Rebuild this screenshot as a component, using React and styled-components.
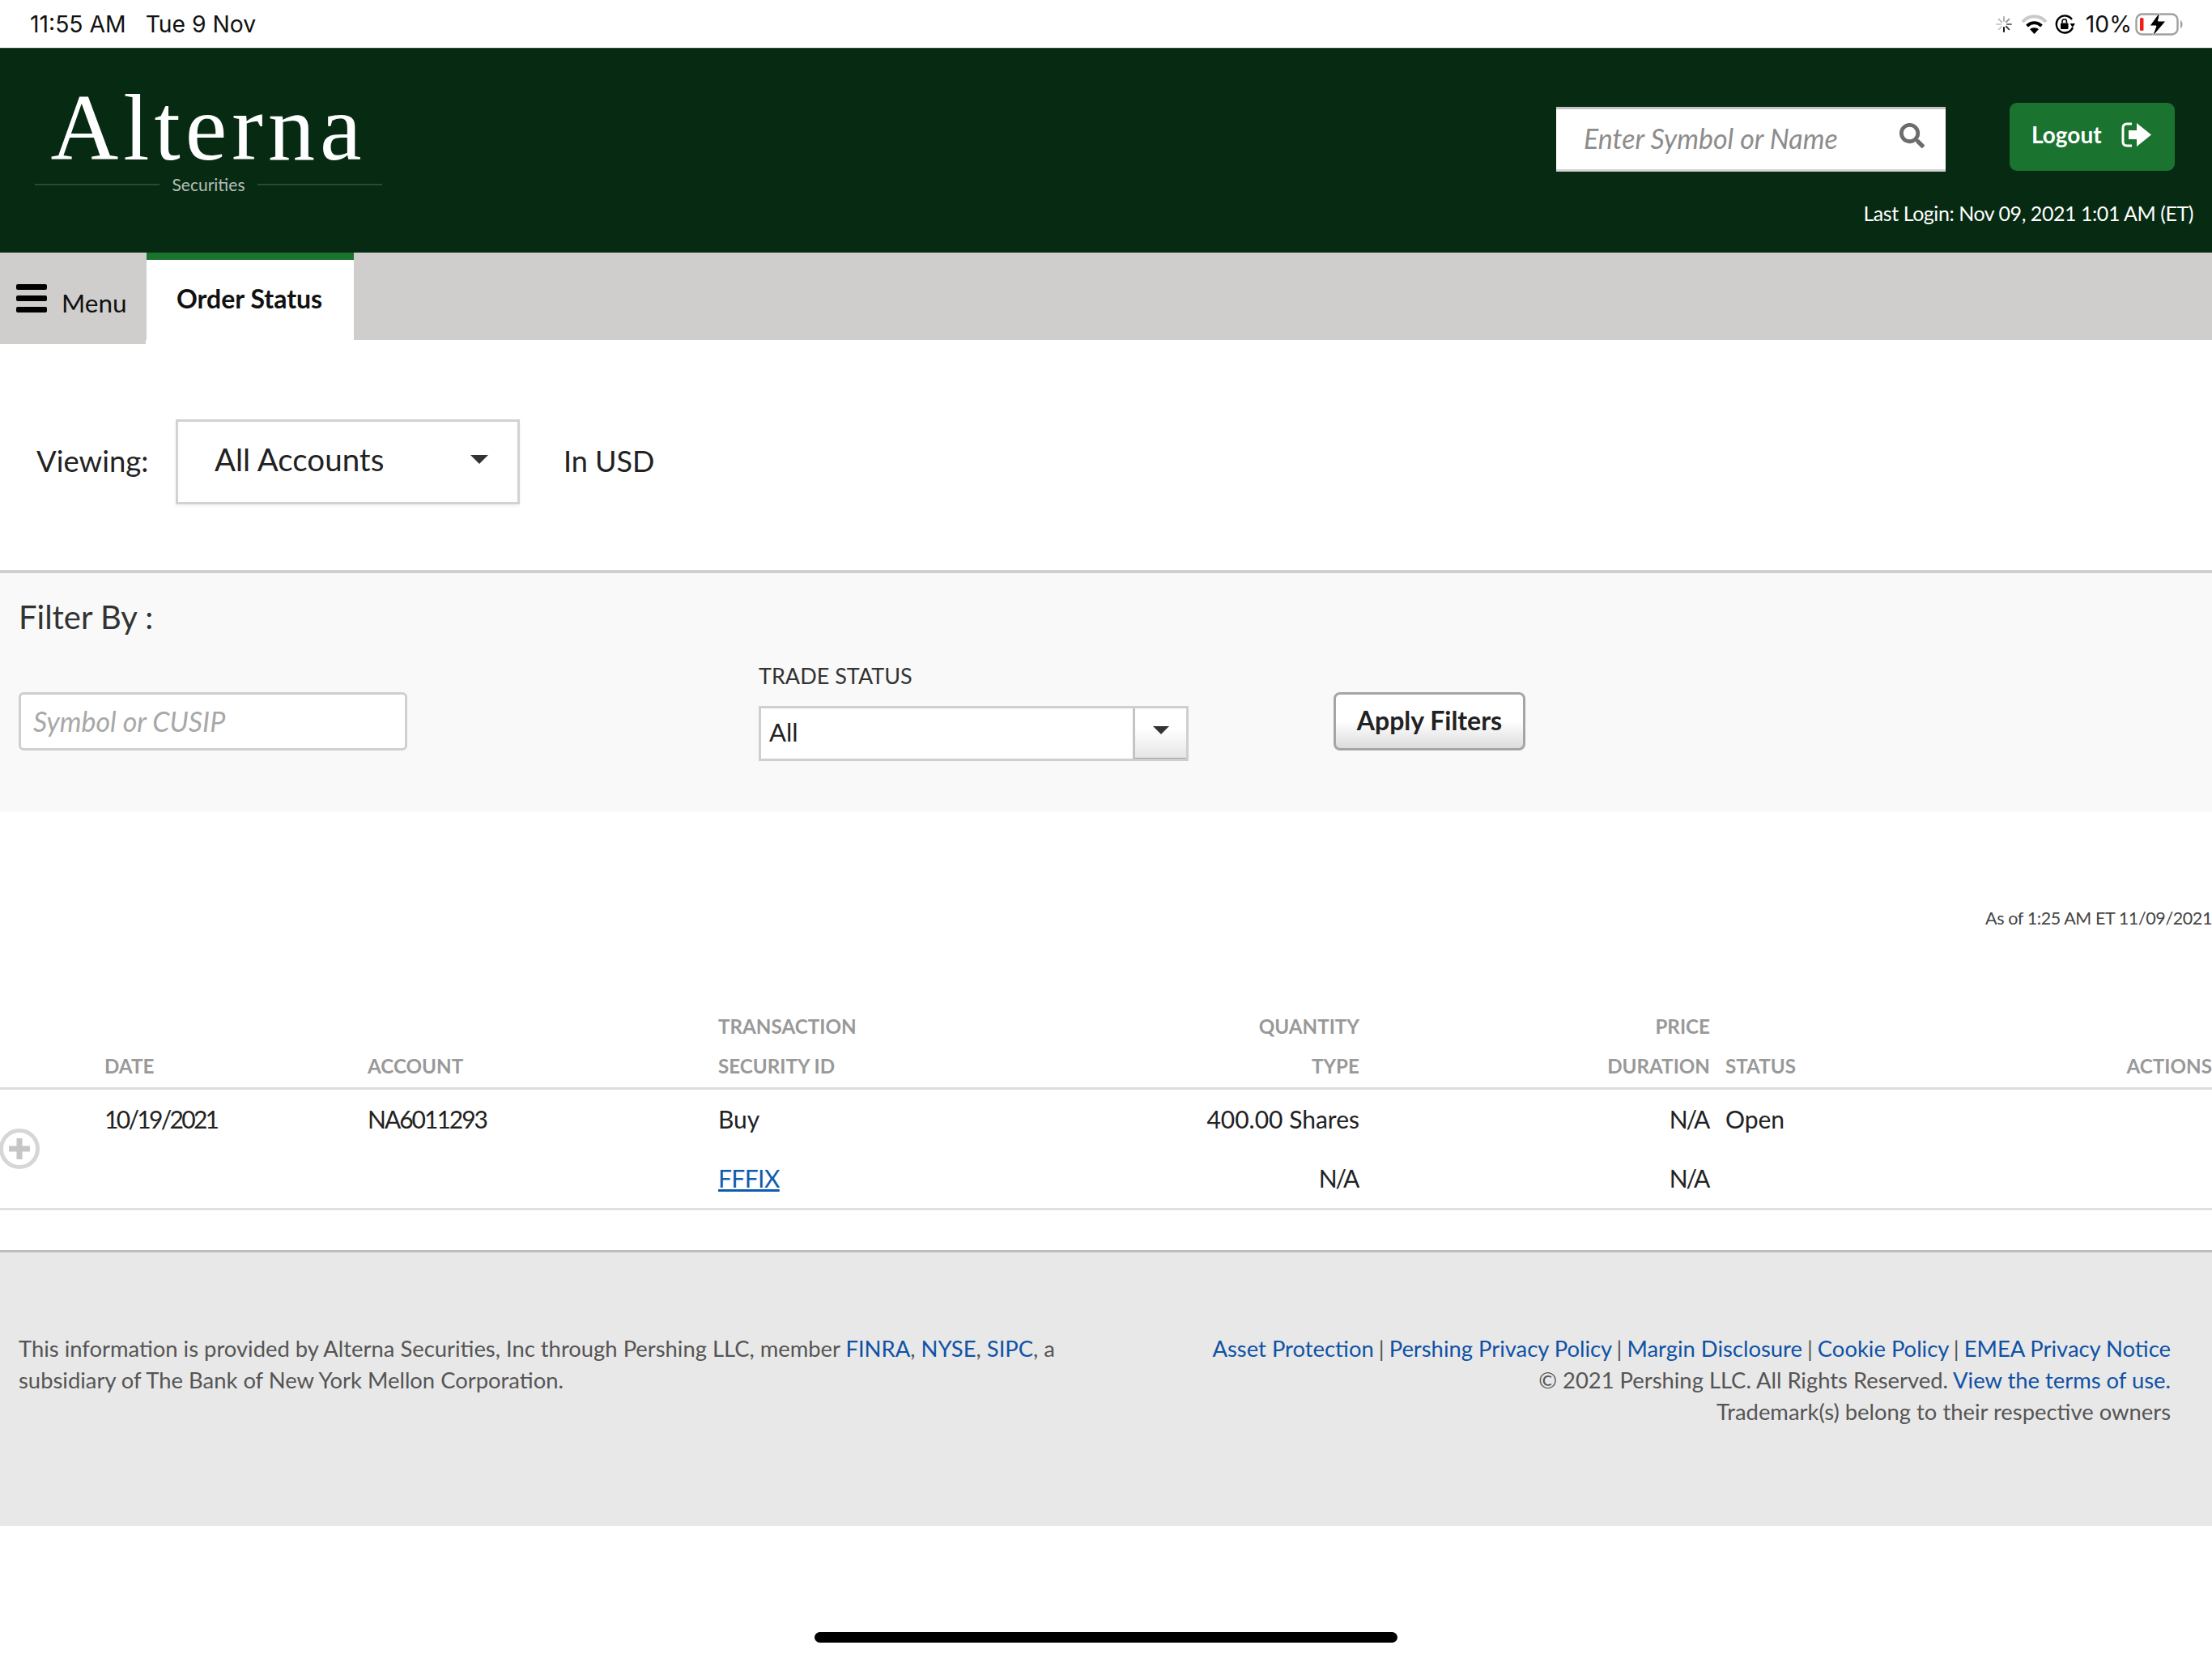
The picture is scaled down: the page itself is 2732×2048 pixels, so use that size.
import React from "react";
import styled, { createGlobalStyle } from "styled-components";
import { FaSearch } from "react-icons/fa";

const GlobalStyle = createGlobalStyle`
  html, body { margin: 0; padding: 0; background: #fff; }
  body { font-family: "Lato", "Liberation Sans", sans-serif; color: #222; }
  * { box-sizing: border-box; }
`;

const Page = styled.div`
  width: 2732px;
  height: 2048px;
  overflow: hidden;
  display: flex;
  flex-direction: column;
  background: #fff;
`;

const StatusBar = styled.div`
  height: 59px;
  flex: none;
  display: flex;
  justify-content: space-between;
  align-items: center;
  padding: 0 35px 0 37px;
  font-family: "Inter", sans-serif;
  font-size: 28.3px;
  color: #111;
`;

const StatusGroup = styled.div`
  display: flex;
  align-items: center;
  gap: ${(p) => p.$gap || 0}px;
`;

const BatteryLabel = styled.span`
  margin: 0 -5px 0 3px;
`;

const Header = styled.header`
  height: 253px;
  flex: none;
  display: flex;
  justify-content: space-between;
  background: #072a12;
  border-top: 1px solid #3a4a40;
`;

const Logo = styled.div`
  width: 429px;
  margin: 48px 0 0 43px;
  color: #fff;
  text-align: center;
`;

const LogoName = styled.div`
  font-family: "Liberation Serif", serif;
  font-size: 116px;
  line-height: 100px;
  letter-spacing: 6px;
`;

const LogoSub = styled.div`
  display: flex;
  align-items: center;
  gap: 16px;
  margin-top: 5px;
  font-size: 21px;
  line-height: 30px;
  color: #b5bfb8;

  &::before,
  &::after {
    content: "";
    flex: 1;
    height: 2px;
    background: #2b4a33;
  }
`;

const HeaderRight = styled.div`
  display: flex;
  flex-direction: column;
  align-items: flex-end;
  padding: 67px 23px 0 0;
`;

const HeaderActions = styled.div`
  display: flex;
  align-items: flex-start;
  gap: 79px;
  margin-right: 23px;
`;

const SearchBox = styled.div`
  width: 481px;
  height: 80px;
  margin-top: 5px;
  display: flex;
  align-items: center;
  justify-content: space-between;
  padding: 0 26px 4px 34px;
  background: #fff;
  border-top: 3px solid #c4c4c4;
  border-bottom: 3px solid #d4d4d4;
  font-size: 34px;
  font-style: italic;
  color: #8c8c8c;
  svg { color: #6c6c6c; font-size: 31px; margin-top: -6px; }
`;

const LogoutButton = styled.button`
  width: 204px;
  height: 84px;
  display: flex;
  align-items: center;
  gap: 24px;
  padding: 0 0 6px 27px;
  border: 0;
  border-radius: 9px;
  background: #1b7330;
  color: #fff;
  font-family: inherit;
  font-size: 28px;
  font-weight: 700;
`;

const LastLogin = styled.div`
  margin-top: 35px;
  font-size: 25px;
  line-height: 32px;
  letter-spacing: -0.45px;
  color: #fff;
`;

const TabBar = styled.nav`
  height: 108px;
  flex: none;
  display: flex;
  align-items: flex-start;
  background: #cfcecc;
`;

const MenuButton = styled.div`
  width: 180px;
  height: 113px;
  flex: none;
  display: flex;
  align-items: center;
  gap: 18px;
  padding: 0 0 0 20px;
  background: #cfcecc;
  font-size: 31.5px;
  color: #111;
  span { margin-top: 10px; }
`;

const Tab = styled.div`
  width: 256px;
  height: 108px;
  flex: none;
  padding: 28px 0 0 37px;
  margin-left: 1px;
  background: #fff;
  border-top: 9px solid #1b7330;
  font-size: 32px;
  line-height: 40px;
  font-weight: 700;
  color: #111;
`;

const ViewingRow = styled.section`
  height: 284px;
  flex: none;
  display: flex;
  align-items: center;
  padding: 0 0 0 45px;
  font-size: 36.5px;
  color: #222;
`;

const ViewingLabel = styled.span`
  width: 172px;
  margin-top: 14px;
`;

const AccountSelect = styled.div`
  width: 425px;
  height: 105px;
  margin-top: 16px;
  display: flex;
  align-items: center;
  justify-content: space-between;
  padding: 0 36px 6px 45px;
  border: 3px solid #d2d2d2;
  box-shadow: 0 2px 4px rgba(0, 0, 0, 0.06);
  font-size: 38.5px;
`;

const Caret = styled.i`
  width: 0;
  height: 0;
  border-left: ${(p) => p.$size}px solid transparent;
  border-right: ${(p) => p.$size}px solid transparent;
  border-top: ${(p) => p.$size}px solid #333;
`;

const Currency = styled.span`
  margin: 14px 0 0 54px;
  font-size: 36px;
`;

const FilterPanel = styled.section`
  height: 299px;
  flex: none;
  padding: 24px 0 0 23px;
  background: #f9f9f9;
  border-top: 4px solid #d0d0d0;
`;

const FilterTitle = styled.div`
  font-size: 40px;
  line-height: 60px;
  color: #333;
`;

const FilterRow = styled.div`
  display: flex;
  align-items: flex-start;
  margin-top: 28px;
`;

const SymbolInput = styled.div`
  width: 480px;
  height: 72px;
  margin: 35px 434px 0 0;
  padding: 0 0 2px 15px;
  display: flex;
  align-items: center;
  background: #fff;
  border: 3px solid #cfcfcf;
  border-radius: 6px;
  font-size: 34px;
  font-style: italic;
  color: #a8a8a8;
`;

const TradeColumn = styled.div`
  width: 531px;
  margin-right: 179px;
`;

const FieldLabel = styled.div`
  font-size: 27px;
  line-height: 30px;
  color: #333;
`;

const TradeSelect = styled.div`
  height: 68px;
  margin-top: 22px;
  display: flex;
  background: #fff;
  border: 3px solid #cfcfcf;
  font-size: 31px;
`;

const TradeValue = styled.div`
  flex: 1;
  padding: 10px 0 0 10px;
  color: #222;
`;

const TradeArrow = styled.div`
  width: 66px;
  display: flex;
  align-items: center;
  justify-content: center;
  padding-bottom: 8px;
  border-left: 3px solid #c4c4c4;
  border-bottom: 1px solid #a0a0a0;
  background: linear-gradient(#fff 40%, #e6e6e6);
`;

const ApplyButton = styled.button`
  width: 237px;
  height: 72px;
  margin-top: 35px;
  border: 3px solid #a5a5a5;
  border-radius: 8px;
  background: linear-gradient(#fff 50%, #dcdcdc);
  font-family: inherit;
  font-size: 32px;
  font-weight: 700;
  color: #222;
  padding: 0 0 4px;
`;

const AsOf = styled.div`
  height: 240px;
  flex: none;
  padding-top: 116px;
  text-align: right;
  font-size: 21.5px;
  line-height: 30px;
  letter-spacing: -0.4px;
  color: #444;
`;

const Row = styled.div`
  display: grid;
  grid-template-columns: 129px 325px 433px 513px 279px 433px 19px 269px 332px;
`;

const HeadRow = styled(Row)`
  padding-bottom: 2px;
  border-bottom: 3px solid #ddd;
  font-size: 24.2px;
  line-height: 49px;
  font-weight: 700;
  color: #999;
`;

const BodyRow = styled(Row)`
  border-bottom: 3px solid #e0e0e0;
  font-size: 30px;
  line-height: 73px;
  color: #222;
`;

const Cell = styled.div`
  grid-column: ${(p) => p.$col};
  display: flex;
  flex-direction: column;
  justify-content: ${(p) => (p.$top ? "flex-start" : "flex-end")};
  text-align: ${(p) => (p.$right ? "right" : "left")};
  letter-spacing: ${(p) => p.$spacing || 0}px;
`;

const NotApplicable = styled.span`
  margin-right: 2px;
  letter-spacing: -2.3px;
`;

const ExpandCell = styled.div`
  grid-column: 1;
  display: flex;
  align-items: center;
`;

const SecurityLink = styled.a`
  color: #0f5cb0;
  text-decoration: underline;
  letter-spacing: -0.6px;
`;

const TableGap = styled.div`
  height: 49px;
  flex: none;
`;

const Footer = styled.footer`
  height: 341px;
  flex: none;
  display: flex;
  justify-content: space-between;
  padding: 99px 51px 0 23px;
  background: #e8e8e8;
  border-top: 3px solid #bdbdbd;
  font-size: 27.4px;
  line-height: 39px;
  color: #555;
`;

const FooterRight = styled.div`
  text-align: right;
`;

const FooterLink = styled.a`
  color: #0f52a5;
  text-decoration: none;
`;

const FooterSep = styled.span`
  margin: 0 -1px;
`;

const HomeZone = styled.div`
  flex: 1;
  display: flex;
  justify-content: center;
  padding-top: 131px;
`;

const HomeBar = styled.div`
  width: 720px;
  height: 13px;
  border-radius: 7px;
  background: #000;
`;

const SpinnerIcon = () => (
  <svg width="24" height="24" viewBox="0 0 24 24">
    {[0.9, 0.75, 0.55, 0.4, 0.3, 0.25, 0.2, 0.2].map((o, i) => (
      <line
        key={i}
        x1="12"
        y1="3"
        x2="12"
        y2="8"
        stroke="#000"
        strokeWidth="2"
        strokeLinecap="round"
        opacity={o}
        transform={`rotate(${180 - i * 45} 12 12)`}
      />
    ))}
  </svg>
);

const WifiIcon = () => (
  <svg width="33" height="25" viewBox="0 0 33 25" fill="none">
    <path d="M2 10 C10 1 23 1 31 10" stroke="#c9c9c9" strokeWidth="4" />
    <path d="M7.5 15 C13 10 20 10 25.5 15" stroke="#000" strokeWidth="4" />
    <path d="M11 19 C14 16.5 19 16.5 22 19 L16.5 25 Z" fill="#000" />
  </svg>
);

const RotationLockIcon = () => (
  <svg width="26" height="24" viewBox="0 0 26 24" fill="none">
    <path d="M21 6 A10.5 10.5 0 1 0 22 16" stroke="#000" strokeWidth="2.4" />
    <path d="M25 11 L18.5 11 L21.8 16 Z" fill="#000" />
    <rect x="7" y="10.5" width="9.5" height="7.5" rx="1" fill="#000" />
    <path d="M9 10.5 V8.5 a2.7 2.7 0 0 1 5.4 0 V10.5" stroke="#000" strokeWidth="1.6" />
  </svg>
);

const BatteryIcon = () => (
  <svg width="60" height="32" viewBox="0 0 60 32" fill="none">
    <rect x="1.5" y="3.5" width="51" height="25" rx="7" stroke="#a0a0a0" strokeWidth="2.4" />
    <path d="M56 11 C58 12 58.5 14 58.5 16 C58.5 18 58 20 56 21 Z" fill="#a0a0a0" />
    <rect x="6" y="8" width="4.5" height="16" rx="1.5" fill="#f01f17" />
    <path d="M31 0 L18 18 H26 L21 32 L38 12 H28.5 Z" fill="#000" stroke="#fff" strokeWidth="1" />
  </svg>
);

const MenuBars = () => (
  <svg width="38" height="35" viewBox="0 0 38 35" fill="#000">
    <rect y="0" width="38" height="7" rx="2" />
    <rect y="14" width="38" height="7" rx="2" />
    <rect y="28" width="38" height="7" rx="2" />
  </svg>
);

const LogoutIcon = () => (
  <svg width="37" height="31" viewBox="0 0 37 31" fill="none">
    <path d="M13 2 H7 Q2 2 2 7 V24 Q2 29 7 29 H13" stroke="#fff" strokeWidth="3" />
    <path d="M9 10 H19 V1 L37 15.5 L19 30 V21 H9 Z" fill="#fff" />
  </svg>
);

const ExpandIcon = () => (
  <svg width="50" height="52" viewBox="0 0 50 52" fill="none">
    <circle cx="24" cy="26" r="22.5" stroke="#d6d6d6" strokeWidth="5" />
    <path d="M24 13 V39 M11 26 H37" stroke="#c6c6c6" strokeWidth="7" />
  </svg>
);

export default function App() {
  return (
    <Page>
      <GlobalStyle />
      <StatusBar>
        <StatusGroup $gap={24}>
          <span>11:55 AM</span>
          <span>Tue 9 Nov</span>
        </StatusGroup>
        <StatusGroup $gap={9}>
          <SpinnerIcon />
          <WifiIcon />
          <RotationLockIcon />
          <BatteryLabel>10%</BatteryLabel>
          <BatteryIcon />
        </StatusGroup>
      </StatusBar>

      <Header>
        <Logo>
          <LogoName>Alterna</LogoName>
          <LogoSub>Securities</LogoSub>
        </Logo>
        <HeaderRight>
          <HeaderActions>
            <SearchBox>
              Enter Symbol or Name
              <FaSearch />
            </SearchBox>
            <LogoutButton>
              Logout
              <LogoutIcon />
            </LogoutButton>
          </HeaderActions>
          <LastLogin>Last Login: Nov 09, 2021 1:01 AM (ET)</LastLogin>
        </HeaderRight>
      </Header>

      <TabBar>
        <MenuButton>
          <MenuBars />
          <span>Menu</span>
        </MenuButton>
        <Tab>Order Status</Tab>
      </TabBar>

      <ViewingRow>
        <ViewingLabel>Viewing:</ViewingLabel>
        <AccountSelect>
          All Accounts
          <Caret $size={11} />
        </AccountSelect>
        <Currency>In USD</Currency>
      </ViewingRow>

      <FilterPanel>
        <FilterTitle>Filter By :</FilterTitle>
        <FilterRow>
          <SymbolInput>Symbol or CUSIP</SymbolInput>
          <TradeColumn>
            <FieldLabel>TRADE STATUS</FieldLabel>
            <TradeSelect>
              <TradeValue>All</TradeValue>
              <TradeArrow>
                <Caret $size={10} />
              </TradeArrow>
            </TradeSelect>
          </TradeColumn>
          <ApplyButton>Apply Filters</ApplyButton>
        </FilterRow>
      </FilterPanel>

      <AsOf>As of 1:25 AM ET 11/09/2021</AsOf>

      <HeadRow>
        <Cell $col={2}>DATE</Cell>
        <Cell $col={3}>ACCOUNT</Cell>
        <Cell $col={4}>
          <span>TRANSACTION</span>
          <span>SECURITY ID</span>
        </Cell>
        <Cell $col={5} $right>
          <span>QUANTITY</span>
          <span>TYPE</span>
        </Cell>
        <Cell $col={6} $right>
          <span>PRICE</span>
          <span>DURATION</span>
        </Cell>
        <Cell $col={8}>STATUS</Cell>
        <Cell $col={9} $right>ACTIONS</Cell>
      </HeadRow>

      <BodyRow>
        <ExpandCell>
          <ExpandIcon />
        </ExpandCell>
        <Cell $col={2} $top $spacing={-2.7}>10/19/2021</Cell>
        <Cell $col={3} $top $spacing={-2}>NA6011293</Cell>
        <Cell $col={4} $top>
          <span>Buy</span>
          <span>
            <SecurityLink>FFFIX</SecurityLink>
          </span>
        </Cell>
        <Cell $col={5} $right>
          <span>400.00 Shares</span>
          <NotApplicable>N/A</NotApplicable>
        </Cell>
        <Cell $col={6} $right>
          <NotApplicable>N/A</NotApplicable>
          <NotApplicable>N/A</NotApplicable>
        </Cell>
        <Cell $col={8} $top>Open</Cell>
      </BodyRow>

      <TableGap />

      <Footer>
        <div>
          This information is provided by Alterna Securities, Inc through Pershing LLC, member{" "}
          <FooterLink>FINRA</FooterLink>, <FooterLink>NYSE</FooterLink>, <FooterLink>SIPC</FooterLink>, a
          <br />
          subsidiary of The Bank of New York Mellon Corporation.
        </div>
        <FooterRight>
          <FooterLink>Asset Protection</FooterLink> <FooterSep>|</FooterSep> <FooterLink>Pershing Privacy Policy</FooterLink>{" "}
          <FooterSep>|</FooterSep> <FooterLink>Margin Disclosure</FooterLink> <FooterSep>|</FooterSep>{" "}
          <FooterLink>Cookie Policy</FooterLink> <FooterSep>|</FooterSep> <FooterLink>EMEA Privacy Notice</FooterLink>
          <br />© 2021 Pershing LLC. All Rights Reserved. <FooterLink>View the terms of use.</FooterLink>
          <br />
          Trademark(s) belong to their respective owners
        </FooterRight>
      </Footer>

      <HomeZone>
        <HomeBar />
      </HomeZone>
    </Page>
  );
}
